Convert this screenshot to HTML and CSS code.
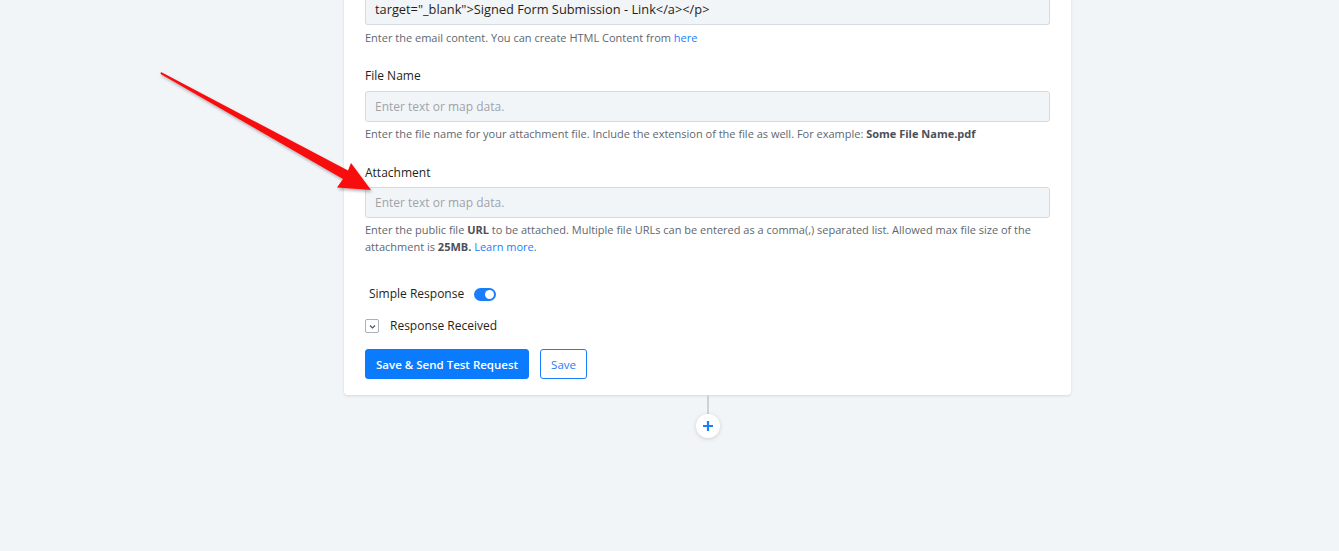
FILE: index.html
```html
<!DOCTYPE html>
<html>
<head>
<meta charset="utf-8">
<link rel="stylesheet" href="styles.css">
</head>
<body>
<div class="page">
  <div class="column">
    <div class="card">
      <div class="field first">
        <div class="textarea">
          <div class="code-line">target="_blank"&gt;Signed Form Submission - Link&lt;/a&gt;&lt;/p&gt;</div>
        </div>
        <p class="help">Enter the email content. You can create HTML Content from <a href="#">here</a></p>
      </div>

      <div class="field">
        <label class="label">File Name</label>
        <div class="input">Enter text or map data.</div>
        <p class="help">Enter the file name for your attachment file. Include the extension of the file as well. For example: <b>Some File Name.pdf</b></p>
      </div>

      <div class="field last">
        <label class="label tight">Attachment</label>
        <div class="input">Enter text or map data.</div>
        <p class="help">Enter the public file <b>URL</b> to be attached. Multiple file URLs can be entered as a comma(,) separated list. Allowed max file size of the attachment is <b>25MB.</b> <a href="#">Learn more</a>.</p>
      </div>

      <div class="toggle-row">
        <span>Simple Response</span>
        <span class="toggle"><span class="knob"></span></span>
      </div>

      <div class="check-row">
        <span class="check">
          <svg width="9" height="9" viewBox="0 0 9 9"><path d="M2 3.5 L4.5 6 L7 3.5" fill="none" stroke="#4a5563" stroke-width="1.2"/></svg>
        </span>
        <span>Response Received</span>
      </div>

      <div class="actions">
        <button class="btn primary">Save &amp; Send Test Request</button>
        <button class="btn outline">Save</button>
      </div>
    </div>
    <div class="connector"></div>
    <div class="add">
      <svg width="12" height="12" viewBox="0 0 12 12"><path d="M6 1 V11 M1 6 H11" stroke="#1a7efb" stroke-width="2.2"/></svg>
    </div>
  </div>
</div>

<svg class="arrow" width="1339" height="551" viewBox="0 0 1339 551">
  <defs>
    <filter id="sh" x="-10%" y="-10%" width="120%" height="130%">
      <feDropShadow dx="1" dy="2" stdDeviation="1.5" flood-color="#000" flood-opacity="0.3"/>
    </filter>
  </defs>
  <polygon filter="url(#sh)" fill="#f70d0d" points="161,72 348,170.5 351,163 371,190 337,187.5 343,179 160.5,74"/>
</svg>
</body>
</html>
```

FILE: styles.css
```css
* { box-sizing: border-box; }
html, body { margin: 0; padding: 0; }
body {
  background: #f2f5f8;
  font-family: "Open Sans", "Noto Sans", sans-serif;
  color: #1e1f21;
  height: 551px;
  overflow: hidden;
}
.page {
  padding-left: 344px;
}
.column {
  width: 727px;
  display: flex;
  flex-direction: column;
  align-items: center;
}
.card {
  width: 727px;
  margin-top: -51px;
  background: #fff;
  border-radius: 4px;
  box-shadow: 0 1px 3px rgba(30, 40, 60, 0.14);
  padding: 0 21px 16px;
}
.field { margin-bottom: 23px; }
.field.first { margin-bottom: 22px; }
.field.first .help { margin-top: 4px; }
.field.last { margin-bottom: 31px; }
.textarea {
  background: #f2f5f8;
  border: 1px solid #d6dbe1;
  border-top: none;
  border-radius: 0 0 3px 3px;
  padding: 0 9px 5px;
  font-size: 12.8px;
  line-height: 20px;
  color: #1e1f21;
  height: 76px;
  display: flex;
  flex-direction: column;
  justify-content: flex-end;
}
.code-line { white-space: nowrap; }
.help {
  margin: 3px 0 0;
  font-size: 11px;
  line-height: 17px;
  color: #606770;
}
.help a { color: #1a7efb; text-decoration: none; }
.help b { color: #4b5058; font-weight: 700; }
.label {
  display: block;
  font-size: 12px;
  line-height: 16px;
  color: #1e1f21;
  margin-bottom: 7px;
}
.label.tight { margin-bottom: 6px; }
.input {
  height: 31px;
  background: #f2f5f8;
  border: 1px solid #d6dbe1;
  border-radius: 3px;
  padding: 0 9px;
  font-size: 12px;
  line-height: 29px;
  color: #9ea3a9;
}
.toggle-row {
  display: flex;
  align-items: center;
  gap: 10px;
  padding-left: 4px;
  font-size: 12px;
  line-height: 16px;
}
.toggle {
  width: 22px;
  height: 13px;
  border-radius: 7px;
  background: #1a7efb;
  display: flex;
  justify-content: flex-end;
  align-items: center;
  padding-right: 2px;
}
.knob {
  width: 9px;
  height: 9px;
  border-radius: 50%;
  background: #fff;
}
.check-row {
  display: flex;
  align-items: center;
  gap: 11px;
  margin-top: 16px;
  font-size: 12px;
  line-height: 16px;
}
.check {
  width: 14px;
  height: 14px;
  border: 1px solid #a9b0b8;
  border-radius: 2px;
  display: flex;
  align-items: center;
  justify-content: center;
}
.actions {
  display: flex;
  gap: 11px;
  margin-top: 15px;
}
.btn {
  height: 30px;
  border-radius: 3px;
  font-family: "Open Sans", "Noto Sans", sans-serif;
  font-size: 11.5px;
  font-weight: 600;
  padding: 0 10px;
  cursor: pointer;
}
.btn.primary {
  background: #0a7bfd;
  border: 1px solid #0a7bfd;
  color: #fff;
}
.btn.outline {
  background: #fff;
  border: 1px solid #1a7efb;
  color: #1a7efb;
  font-weight: 400;
}
.connector {
  width: 2px;
  height: 19px;
  background: #cdd2d9;
}
.add {
  width: 24px;
  height: 24px;
  border-radius: 50%;
  background: #fff;
  box-shadow: 0 1px 4px rgba(30, 40, 60, 0.18);
  display: flex;
  align-items: center;
  justify-content: center;
}
.arrow {
  position: absolute;
  left: 0;
  top: 0;
  pointer-events: none;
}
```
